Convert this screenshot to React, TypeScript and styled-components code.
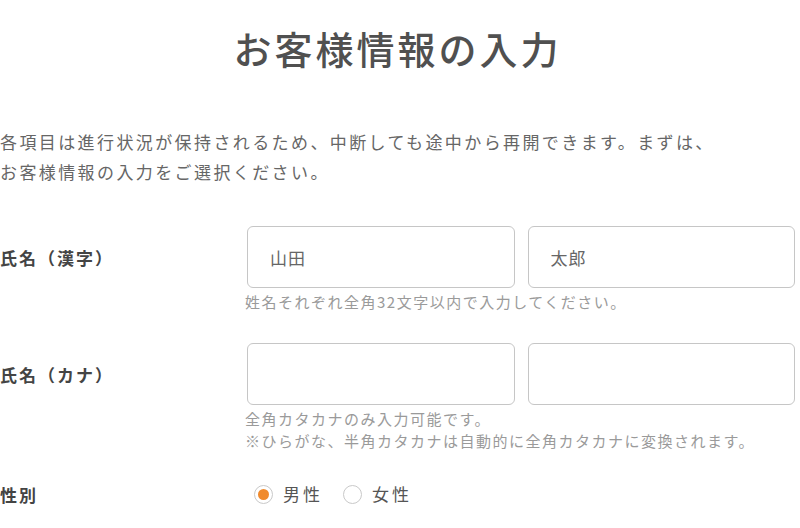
import styled, { createGlobalStyle } from 'styled-components';

const GlobalStyle = createGlobalStyle`
  body {
    margin: 0;
    background: #fff;
    font-family: "Noto Sans CJK JP", "Noto Sans", sans-serif;
    color: #555;
  }
`;

export default function App() {
  return (
    <>
      <GlobalStyle />
      <Page>
        <Title>お客様情報の入力</Title>
        <Lead>
          各項目は進行状況が保持されるため、中断しても途中から再開できます。まずは、
          <br />
          お客様情報の入力をご選択ください。
        </Lead>

        <Form>
          <Row>
            <Label>氏名（漢字）</Label>
            <Field>
              <Inputs>
                <Input defaultValue="山田" />
                <Input defaultValue="太郎" />
              </Inputs>
              <Hint>姓名それぞれ全角32文字以内で入力してください。</Hint>
            </Field>
          </Row>

          <Row>
            <Label>氏名（カナ）</Label>
            <Field>
              <Inputs>
                <Input />
                <Input />
              </Inputs>
              <Hint>
                全角カタカナのみ入力可能です。
                <br />
                ※ひらがな、半角カタカナは自動的に全角カタカナに変換されます。
              </Hint>
            </Field>
          </Row>

          <Row $short>
            <Label $short>性別</Label>
            <Radios>
              <RadioItem>
                <RadioMark $checked />
                男性
              </RadioItem>
              <RadioItem>
                <RadioMark />
                女性
              </RadioItem>
            </Radios>
          </Row>
        </Form>
      </Page>
    </>
  );
}

const Page = styled.div`
  width: 800px;
  padding-right: 5px;
  box-sizing: border-box;
`;

const Title = styled.h1`
  margin: 20px 0 0;
  text-align: center;
  font-size: 38px;
  line-height: 56px;
  letter-spacing: 3px;
  font-weight: 500;
  color: #505050;
`;

const Lead = styled.p`
  margin: 51px 0 0;
  font-size: 17px;
  line-height: 30px;
  letter-spacing: 2.4px;
  color: #666;
`;

const Form = styled.div`
  margin-top: 39px;
  display: flex;
  flex-direction: column;
  gap: 30px;
`;

const Row = styled.div<{ $short?: boolean }>`
  display: grid;
  grid-template-columns: 247px 1fr;
  align-items: ${(p) => (p.$short ? 'center' : 'start')};
`;

const Label = styled.div<{ $short?: boolean }>`
  height: ${(p) => (p.$short ? '24px' : '62px')};
  display: flex;
  align-items: center;
  font-size: 17px;
  font-weight: 700;
  letter-spacing: 2px;
  color: #444;
`;

const Field = styled.div`
  display: flex;
  flex-direction: column;
`;

const Inputs = styled.div`
  display: flex;
  gap: 13px;
`;

const Input = styled.input`
  flex: 1;
  min-width: 0;
  height: 62px;
  box-sizing: border-box;
  border: 1.5px solid #c6c6c6;
  border-radius: 6px;
  padding: 0 22px;
  font-family: inherit;
  font-size: 17px;
  letter-spacing: 1px;
  color: #666;
  background: #fff;
  outline: none;
`;

const Hint = styled.p`
  margin: 3px 0 0 -2px;
  font-size: 15px;
  line-height: 22px;
  letter-spacing: 1.5px;
  color: #9a9a9a;
`;

const Radios = styled.div`
  display: flex;
  align-items: center;
  gap: 20px;
  padding-left: 7px;
`;

const RadioItem = styled.label`
  display: flex;
  align-items: center;
  gap: 10px;
  font-size: 17px;
  line-height: 24px;
  letter-spacing: 3px;
  color: #555;
`;

const RadioMark = styled.span<{ $checked?: boolean }>`
  width: 19px;
  height: 19px;
  box-sizing: border-box;
  border-radius: 50%;
  border: 1.5px solid #c9c9c9;
  background: #fff;
  display: flex;
  align-items: center;
  justify-content: center;

  &::after {
    content: '';
    width: 11px;
    height: 11px;
    border-radius: 50%;
    background: ${(p) => (p.$checked ? '#f08a2c' : 'transparent')};
  }
`;
